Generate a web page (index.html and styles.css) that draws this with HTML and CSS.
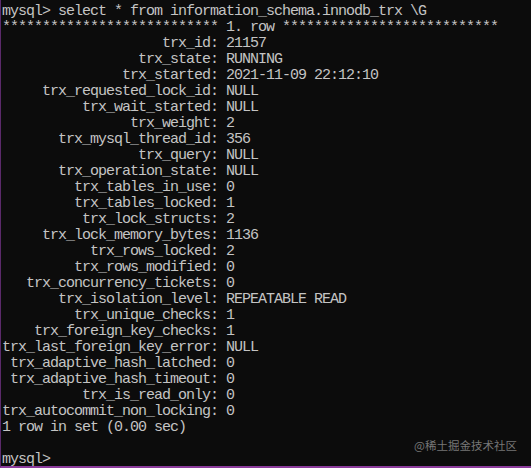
FILE: index.html
```html
<!DOCTYPE html>
<html lang="en">
<head>
<meta charset="utf-8">
<title>mysql</title>
<link rel="stylesheet" href="styles.css">
</head>
<body>
<div class="console">
<pre class="screen">mysql&gt; select * from information_schema.innodb_trx \G
*************************** 1. row ***************************
                    trx_id: 21157
                 trx_state: RUNNING
               trx_started: 2021-11-09 22:12:10
     trx_requested_lock_id: NULL
          trx_wait_started: NULL
                trx_weight: 2
       trx_mysql_thread_id: 356
                 trx_query: NULL
       trx_operation_state: NULL
         trx_tables_in_use: 0
         trx_tables_locked: 1
          trx_lock_structs: 2
     trx_lock_memory_bytes: 1136
           trx_rows_locked: 2
         trx_rows_modified: 0
   trx_concurrency_tickets: 0
       trx_isolation_level: REPEATABLE READ
         trx_unique_checks: 1
    trx_foreign_key_checks: 1
trx_last_foreign_key_error: NULL
 trx_adaptive_hash_latched: 0
 trx_adaptive_hash_timeout: 0
          trx_is_read_only: 0
trx_autocommit_non_locking: 0
1 row in set (0.00 sec)

mysql&gt;</pre>
<div class="watermark">@稀土掘金技术社区</div>
</div>
</body>
</html>
```
FILE: styles.css
```css
html, body {
  margin: 0;
  padding: 0;
  background: #0c0c0c;
}
.console {
  position: relative;
  width: 530px;
  height: 466px;
  background: #0c0c0c;
  border-left: 1px solid #5b2a6b;
  border-bottom: 2px solid #8c3c9c;
  overflow: hidden;
}
.screen {
  margin: 0;
  padding: 4px 0 0 1px;
  font-family: "Liberation Mono", "DejaVu Sans Mono", monospace;
  font-size: 15px;
  letter-spacing: -1px;
  line-height: 16px;
  color: #c4c4c4;
  white-space: pre;
}
.watermark {
  position: absolute;
  right: 14px;
  bottom: 14px;
  font-family: "Noto Sans CJK SC", "Noto Sans", sans-serif;
  font-size: 11.5px;
  line-height: 14px;
  color: #777777;
}
```
